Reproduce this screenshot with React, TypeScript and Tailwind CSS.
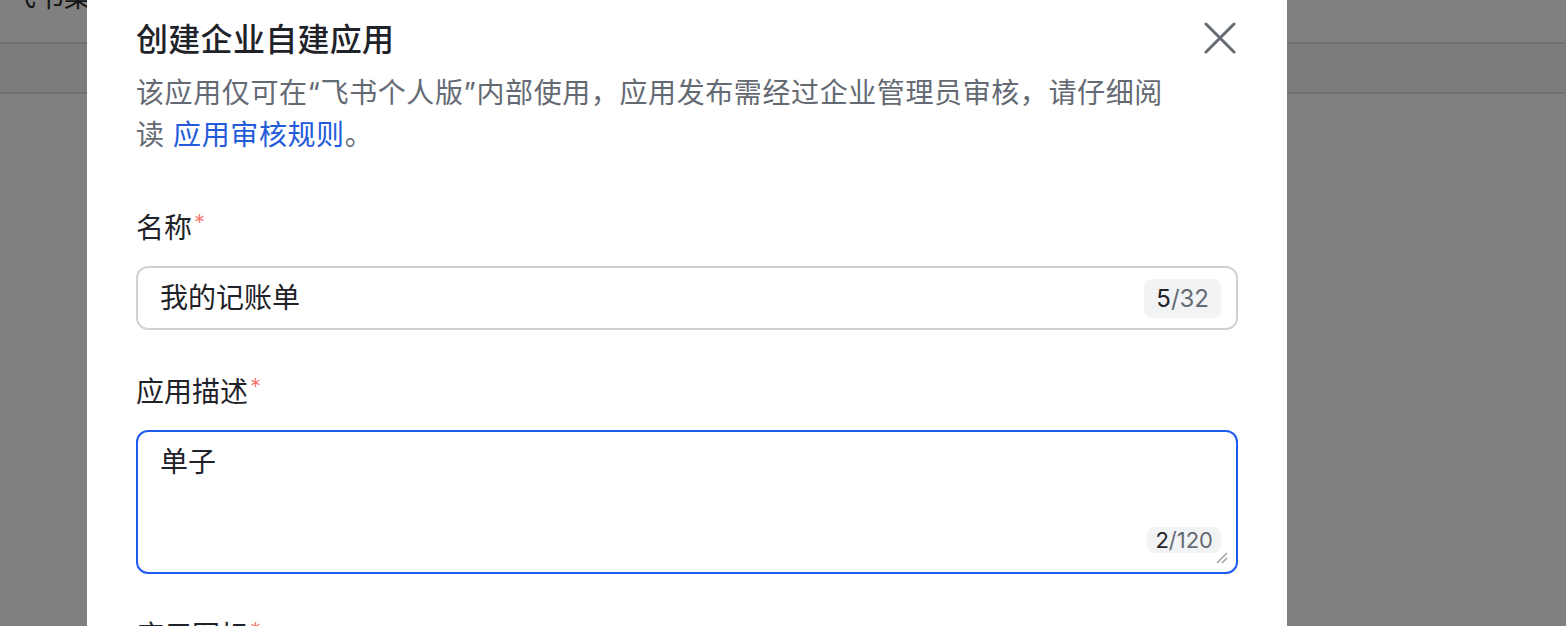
const FONT = "font-['Inter','Noto_Sans_CJK_SC',sans-serif]"

const CloseIcon = () => (
  <svg width="32" height="32" viewBox="0 0 32 32" fill="none">
    <path d="M2 2L30 30M30 2L2 30" stroke="#646a73" strokeWidth="3" strokeLinecap="round" />
  </svg>
)

const Required = () => (
  <span className="ml-[2px] align-top text-[22px] font-light leading-[30px] text-[#f76964]">*</span>
)

const Counter = ({ value, max, small }: { value: number; max: number; small?: boolean }) => (
  <span
    className={
      small
        ? 'rounded-[8px] bg-[#f2f3f5] px-[8px] text-[22px] leading-[32px]'
        : 'rounded-[8px] bg-[#f2f3f5] px-[12px] text-[24px] leading-[39px]'
    }
  >
    <span className="text-[#1f2329]">{value}</span>
    <span className="text-[#646a73]">/{max}</span>
  </span>
)

export default function App() {
  return (
    <div className={`relative h-[626px] w-[1566px] overflow-hidden bg-[#808080] ${FONT}`}>
      {/* page behind the mask */}
      <div className="flex flex-col">
        <div className="h-[42px] overflow-hidden">
          <div className="-mt-[24px] pl-[8px] text-[28px] leading-[42px] text-[#151515]">飞书集成平台</div>
        </div>
        <div className="h-[2px] bg-[#6f716f]" />
        <div className="h-[48px] bg-[#7b7d7c]" />
        <div className="h-[2px] bg-[#6f716f]" />
      </div>

      {/* dialog */}
      <div className="absolute left-[87px] top-0 h-[626px] w-[1200px] bg-white px-[49px] pt-[16px]">
        <div className="flex items-start justify-between">
          <h2 className="text-[32px] font-medium leading-[48px] tracking-[0.3px] text-[#1f2329]">创建企业自建应用</h2>
          <button className="mr-[2px] mt-[6px]">
            <CloseIcon />
          </button>
        </div>

        <p className="mt-[8px] text-[28px] leading-[42px] tracking-[0.6px] text-[#646a73]">
          该应用仅可在“飞书个人版”内部使用，应用发布需经过企业管理员审核，请仔细阅
          <br />读 <span className="text-[#245bdb]">应用审核规则</span>。
        </p>

        <div className="mt-[51px] text-[28px] leading-[42px] text-[#1f2329]">
          名称
          <Required />
        </div>
        <div className="mt-[17px] flex h-[64px] items-center justify-between rounded-[12px] border-2 border-[#d0d3d6] pl-[22px] pr-[15px]">
          <span className="text-[28px] text-[#1f2329]">我的记账单</span>
          <Counter value={5} max={32} />
        </div>

        <div className="mt-[41px] text-[28px] leading-[42px] text-[#1f2329]">
          应用描述
          <Required />
        </div>
        <div className="relative mt-[17px] h-[144px] rounded-[12px] border-2 border-[#1f5bf1] pl-[22px] pt-[9px]">
          <span className="text-[28px] leading-[42px] text-[#1f2329]">单子</span>
          <div className="absolute bottom-[16px] right-[15px]">
            <Counter value={2} max={120} small />
          </div>
          <svg className="absolute bottom-[8px] right-[8px]" width="14" height="14" viewBox="0 0 14 14">
            <path d="M13 3L3 13M13 8L8 13" stroke="#9da2a8" strokeWidth="1.5" />
          </svg>
        </div>

        <div className="mt-[41px] text-[28px] leading-[42px] text-[#1f2329]">
          应用图标
          <Required />
        </div>
      </div>
    </div>
  )
}
